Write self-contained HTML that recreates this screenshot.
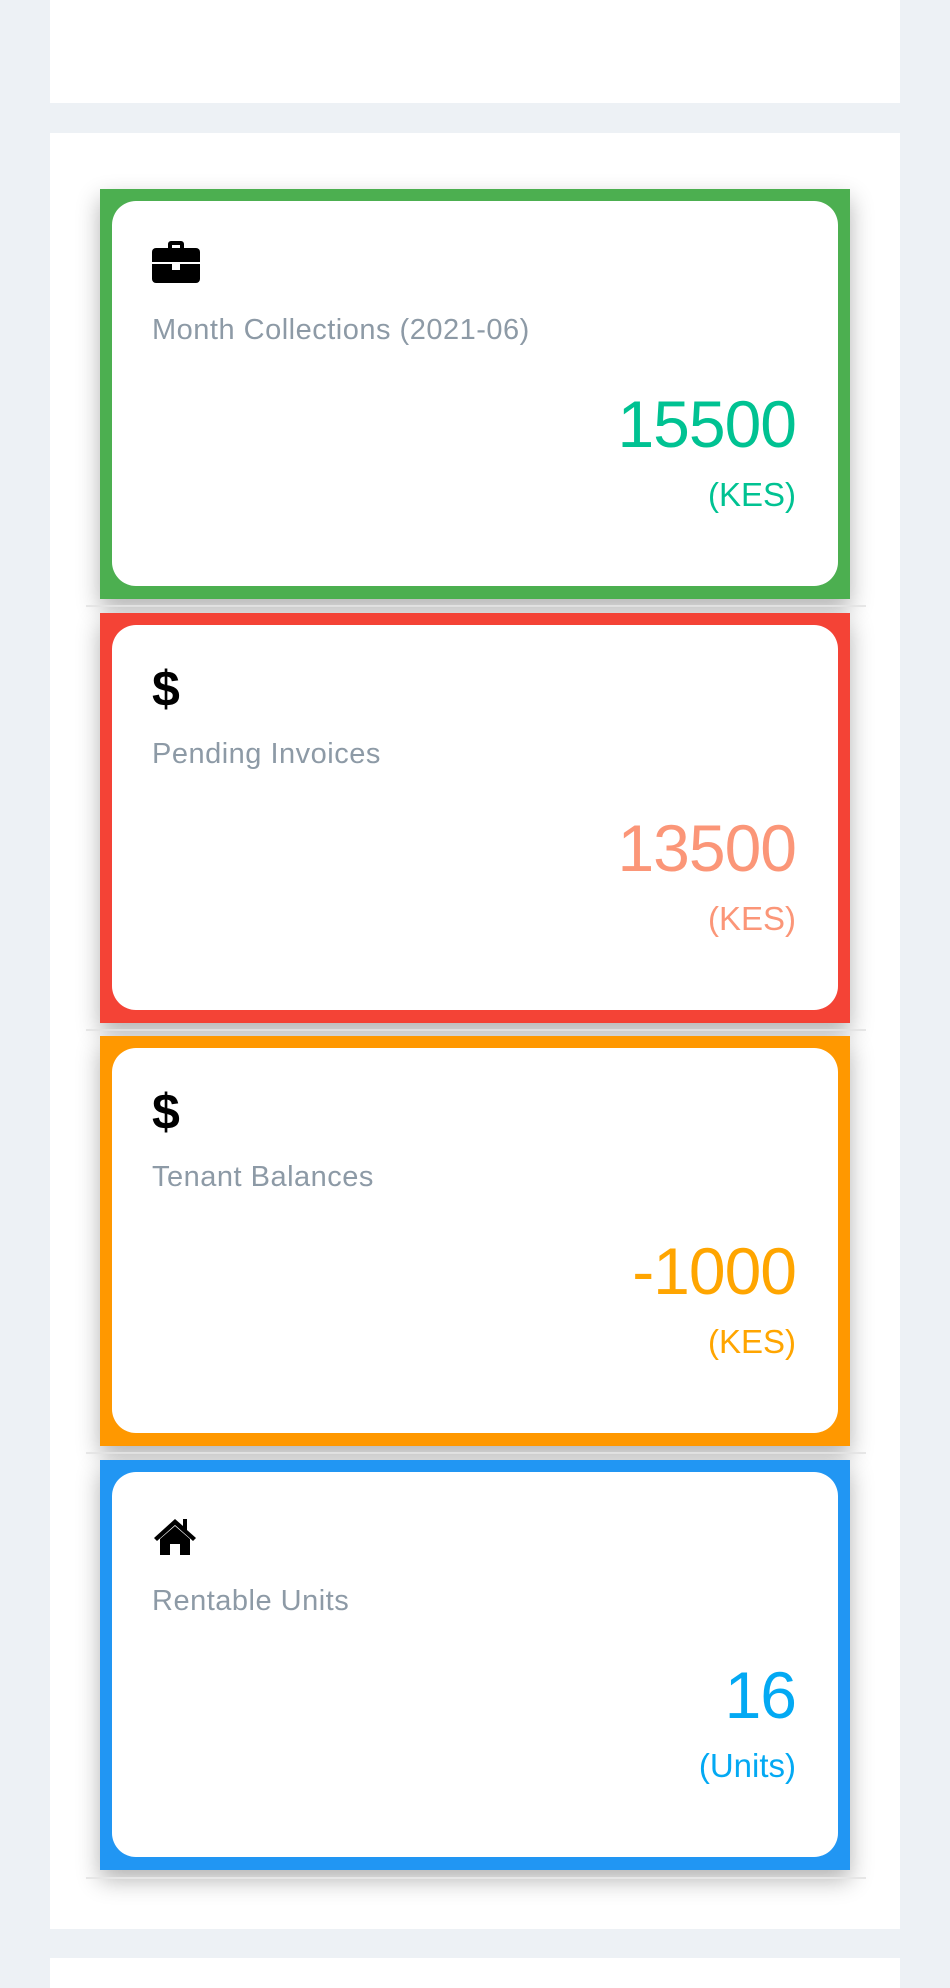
<!DOCTYPE html>
<html><head><meta charset="utf-8"><style>
html,body{margin:0;padding:0;}
body{width:950px;height:1960px;background:#edf1f5;position:relative;overflow:hidden;font-family:"Liberation Sans",sans-serif;}
.panel{position:absolute;left:50px;width:850px;background:#fff;}
.sep{position:absolute;left:86px;width:780px;height:2px;background:#e6e6e6;}
.card{position:absolute;left:100px;width:750px;height:410px;box-shadow:0 10px 22px rgba(0,0,0,0.30);}
.inner{position:absolute;left:12px;top:12px;right:12px;bottom:13px;background:#fff;border-radius:24px;}
.icon{position:absolute;left:40px;top:40px;}
.label{position:absolute;left:40px;top:115px;font-size:29px;line-height:29px;letter-spacing:0.5px;color:#8d9aa6;white-space:nowrap;}
.num{position:absolute;right:42px;top:190px;font-size:66px;line-height:66px;letter-spacing:-1px;white-space:nowrap;}
.unit{position:absolute;right:42px;top:277px;font-size:33px;line-height:33px;white-space:nowrap;}
.dollar{position:absolute;left:40px;top:39px;font-size:50px;line-height:50px;font-weight:bold;color:#000;}
</style></head><body>
<div class="panel" style="top:0;height:103px;"></div>
<div class="panel" style="top:133px;height:1796px;"></div>
<div class="panel" style="top:1958px;height:30px;"></div>

<div class="card" style="top:189px;background:#4caf50;"><div class="inner">
<svg class="icon" width="48" height="42" viewBox="0 0 48 42"><path d="M16 7V3a3 3 0 0 1 3-3h10a3 3 0 0 1 3 3v4h-4V4h-8v3z" fill="#000"/><path d="M4 7h40a4 4 0 0 1 4 4v10H0V11a4 4 0 0 1 4-4z" fill="#000"/><path d="M0 23h20v6h8v-6h20v15a4 4 0 0 1-4 4H4a4 4 0 0 1-4-4z" fill="#000"/></svg>
<div class="label">Month Collections (2021-06)</div>
<div class="num" style="color:#00c292;">15500</div>
<div class="unit" style="color:#00c292;">(KES)</div>
</div></div>
<div class="sep" style="top:605px;"></div>

<div class="card" style="top:613px;background:#f44336;"><div class="inner">
<div class="dollar">$</div>
<div class="label">Pending Invoices</div>
<div class="num" style="color:#fb9678;">13500</div>
<div class="unit" style="color:#fb9678;">(KES)</div>
</div></div>
<div class="sep" style="top:1029px;"></div>

<div class="card" style="top:1036px;background:#ff9800;"><div class="inner">
<div class="dollar">$</div>
<div class="label">Tenant Balances</div>
<div class="num" style="color:#ffa500;">-1000</div>
<div class="unit" style="color:#ffa500;">(KES)</div>
</div></div>
<div class="sep" style="top:1452px;"></div>

<div class="card" style="top:1460px;background:#2196f3;"><div class="inner">
<svg class="icon" style="left:41px;top:45px" width="44" height="38" viewBox="0 0 44 38"><path d="M22 2L1 21l3 3L22 8l18 16 3-3-9-8V2h-4v7z" fill="#000"/><path d="M7 22L22 9l15 13v16H27V27h-10v11H7z" fill="#000"/></svg>
<div class="label">Rentable Units</div>
<div class="num" style="color:#03a9f3;">16</div>
<div class="unit" style="color:#03a9f3;">(Units)</div>
</div></div>
<div class="sep" style="top:1877px;"></div>
</body></html>
